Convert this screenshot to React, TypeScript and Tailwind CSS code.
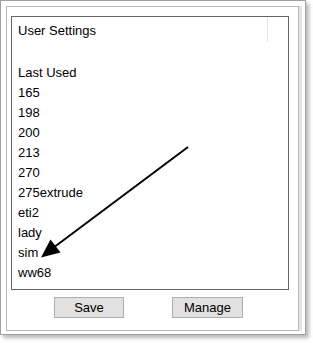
import React from "react";

const items = ["Last Used", "165", "198", "200", "213", "270", "275extrude", "eti2", "lady", "sim", "ww68"];

export default function App() {
  return (
    <div
      className="relative w-[313px] h-[343px] bg-white text-black"
      style={{ fontFamily: '"Liberation Sans", Arial, sans-serif' }}
    >
      <div className="w-[306px] h-[335px] border border-[#a0a0a0] bg-white shadow-[3px_3px_4px_rgba(0,0,0,0.28)] p-[5px]">
        <div className="w-[293px] h-[325px] border border-[#b9b9b9] shadow-[3px_0_0_#e4e4e4] pl-[4px] pt-[9px]">
          <div className="relative w-[278px] h-[274px] border border-[#646464] pl-[6px] pt-[4px] text-[13px] leading-[20px]">
            <div className="absolute left-[255px] top-0 w-px h-[25px] bg-[#e3e3e3]" />
            <div>User Settings</div>
            <div className="h-[22px]" />
            {items.map((t) => (
              <div key={t}>{t}</div>
            ))}
          </div>
          <div className="flex gap-[48px] ml-[43px] mt-[7px]">
            <button className="w-[70px] h-[21px] bg-[#e1e1e1] border border-[#adadad] text-[13px] leading-[19px] text-center">
              Save
            </button>
            <button className="w-[71px] h-[21px] bg-[#e1e1e1] border border-[#adadad] text-[13px] leading-[19px] text-center">
              Manage
            </button>
          </div>
        </div>
      </div>
      <svg className="absolute left-0 top-0" width="313" height="343" viewBox="0 0 313 343">
        <line x1="188" y1="147" x2="55" y2="246.5" stroke="#000" strokeWidth="2" />
        <polygon points="41,257.5 60.5,252.5 50.5,239.5" fill="#000" />
      </svg>
    </div>
  );
}
